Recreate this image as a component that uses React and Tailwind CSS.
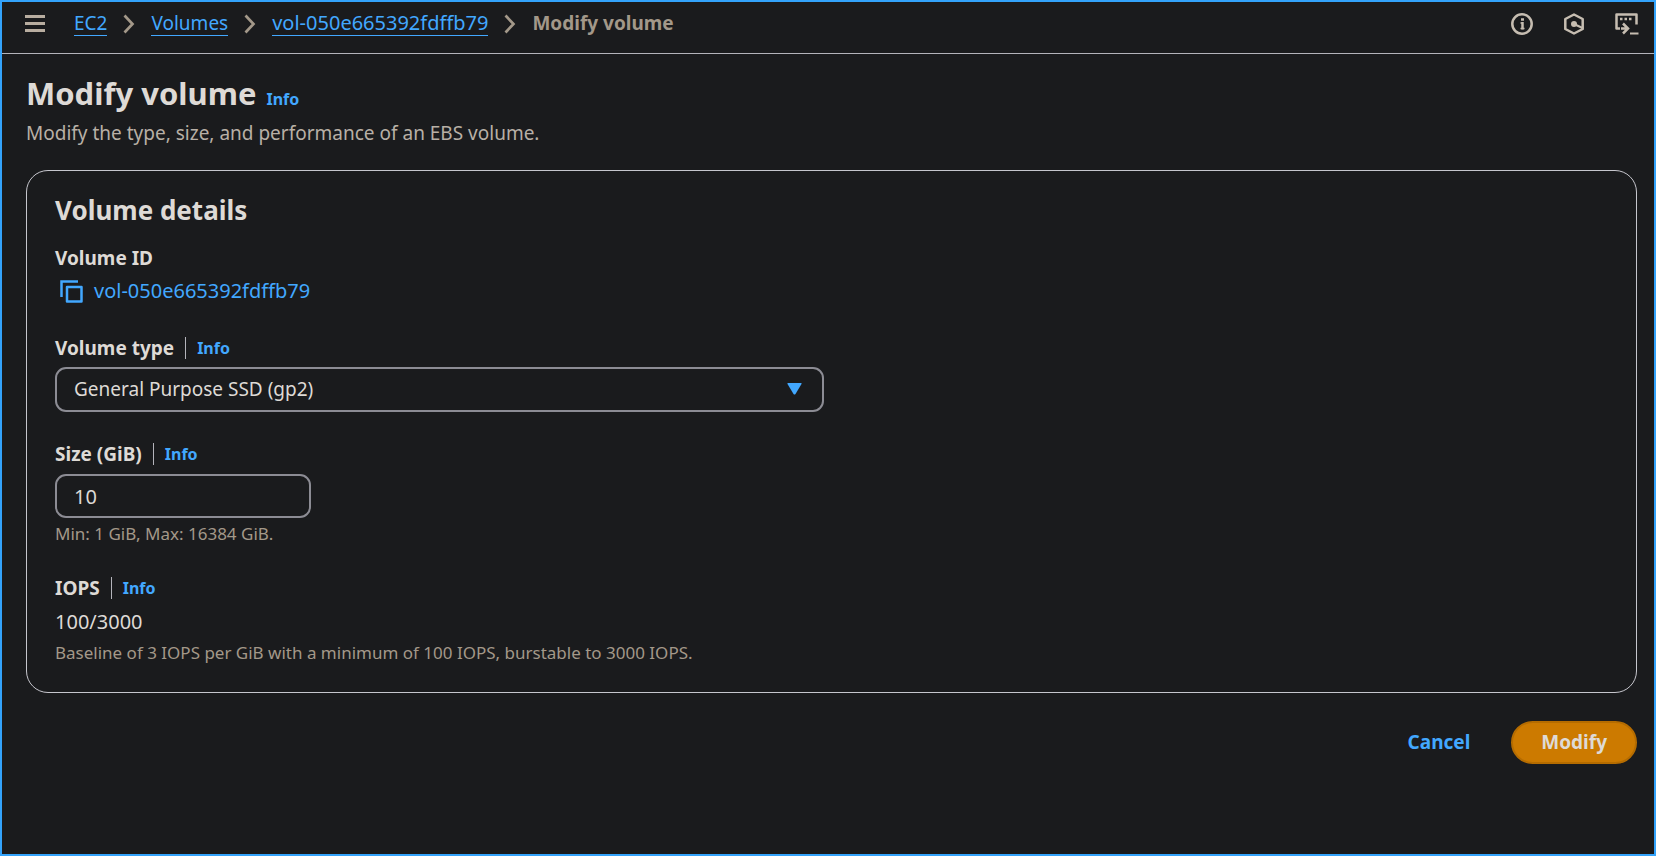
import React from "react";

const CRUMBS = [
  { label: "EC2", size: "text-[19px]" },
  { label: "Volumes", size: "text-[19px]" },
  { label: "vol-050e665392fdffb79", size: "text-[20px]" },
];

const ChevronIcon = () => (
  <svg width="12" height="20" viewBox="0 0 12 20" fill="none" stroke="#a39889" strokeWidth="2.700" aria-hidden="true">
    <path d="M1.500 1.500 9.500 10 1.500 18.500" />
  </svg>
);

const MenuIcon = () => (
  <svg width="20" height="18" viewBox="0 0 20 18" fill="#b8ada0" aria-hidden="true">
    <path d="M0 0h20v3H0zM0 7h20v3H0zM0 14h20v3H0z" />
  </svg>
);

const InfoIcon = () => (
  <svg width="22" height="22" viewBox="0 0 22 22" fill="none" stroke="#c6bdb1" aria-hidden="true">
    <circle cx="11" cy="11" r="9.700" strokeWidth="2.500" />
    <path d="M11.500 9v7.500" strokeWidth="2.500" />
    <path d="M9.500 10h2M9.500 15.500h4" strokeWidth="1.500" />
    <path d="M10 6.500h3" strokeWidth="2.500" />
  </svg>
);

const HexagonIcon = () => (
  <svg width="22" height="22" viewBox="0 0 22 22" fill="none" stroke="#c6bdb1" strokeWidth="2.500" aria-hidden="true">
    <path d="M11 1.500 19.700 6v10L11 20.500 2.300 16V6z" strokeLinejoin="round" />
    <circle cx="11" cy="11" r="3" fill="#c6bdb1" stroke="none" />
    <path d="m11 11 8.500 4" strokeWidth="2.200" />
  </svg>
);

const ShellIcon = () => (
  <svg width="24" height="22" viewBox="0 0 24 22" fill="none" stroke="#c6bdb1" strokeWidth="2.500" aria-hidden="true">
    <path d="M5 15.500H1.500V1.500h20v10" strokeLinejoin="round" />
    <path d="M5 6h2.500M9.500 6h2.500M14 6h2.500" />
    <path d="M6 15.500h6.500M8 10.500l5 5-5 5" />
    <path d="M15 20.500h8.500" strokeWidth="2" />
  </svg>
);

const CopyIcon = () => (
  <svg width="23" height="23" viewBox="0 0 23 23" fill="none" stroke="#42a8ff" strokeWidth="2.500" aria-hidden="true">
    <path d="M1.500 17V1.500H18" />
    <path d="M7 7h14.500v14.500H7z" strokeLinejoin="round" />
  </svg>
);

const InfoLink = ({ topic }) => (
  <a href="#info" aria-label={`Info: ${topic}`} className="text-[16px] font-bold text-[#42a8ff]">
    Info
  </a>
);

const FieldLabel = ({ htmlFor, children }) => (
  <div className="flex h-7 items-center">
    {htmlFor ? (
      <label htmlFor={htmlFor} className="font-bold">
        {children}
      </label>
    ) : (
      <span className="font-bold">{children}</span>
    )}
    <span className="mr-[11px] ml-[11px] h-[22px] w-px bg-[#b4b4bb]" />
    <InfoLink topic={children} />
  </div>
);

const Header = () => (
  <header className="flex h-[52px] items-center justify-between border-b border-[#b4b4bb] pr-[15px] pb-2 pl-[23px]">
    <div className="flex items-center">
      <button type="button" aria-label="Open navigation">
        <MenuIcon />
      </button>
      <nav aria-label="Breadcrumbs" className="ml-[29px]">
        <ol className="flex items-center gap-4">
          {CRUMBS.map((crumb) => (
            <li key={crumb.label} className="flex items-center gap-4">
              <a href="#crumb" className={`border-b border-[#42a8ff] leading-6 text-[#42a8ff] ${crumb.size}`}>
                {crumb.label}
              </a>
              <ChevronIcon />
            </li>
          ))}
          <li className="font-bold text-[#a39889]">Modify volume</li>
        </ol>
      </nav>
    </div>
    <div className="flex items-center gap-[30px]">
      <button type="button" aria-label="Information">
        <InfoIcon />
      </button>
      <button type="button" aria-label="Settings">
        <HexagonIcon />
      </button>
      <button type="button" aria-label="CloudShell">
        <ShellIcon />
      </button>
    </div>
  </header>
);

const VolumeDetails = () => (
  <section className="mt-[23px] rounded-[22px] border border-[#c6c6cd] px-7 pt-[21px] pb-[27px]">
    <h2 className="text-[26px] leading-9 font-bold">Volume details</h2>

    <div className="mt-4">
      <div className="leading-7 font-bold">Volume ID</div>
      <div className="mt-[3px] flex h-8 items-center gap-[11px] pl-[5px]">
        <button type="button" aria-label="Copy volume ID">
          <CopyIcon />
        </button>
        <a href="#volume" className="text-[20px] text-[#42a8ff]">
          vol-050e665392fdffb79
        </a>
      </div>
    </div>

    <div className="mt-[27px]">
      <FieldLabel htmlFor="volume-type">Volume type</FieldLabel>
      <div className="relative mt-[5px] max-w-[769px]">
        <select
          id="volume-type"
          className="h-[45px] w-full appearance-none rounded-[11px] border-2 border-[#8c8c94] bg-[#1a1b1d] px-[17px]"
        >
          <option>General Purpose SSD (gp2)</option>
        </select>
        <svg
          className="pointer-events-none absolute top-4 right-[22px]"
          width="15"
          height="12"
          viewBox="0 0 15 12"
          fill="#42a8ff"
          aria-hidden="true"
        >
          <path d="M1 0h13q1 0 .5 1L8.500 11q-1 1-2 0L.5 1Q0 0 1 0z" />
        </svg>
      </div>
    </div>

    <div className="mt-7">
      <FieldLabel htmlFor="size">Size (GiB)</FieldLabel>
      <input
        id="size"
        type="text"
        defaultValue="10"
        className="mt-1.5 block h-11 w-64 rounded-[11px] border-2 border-[#8c8c94] bg-[#1a1b1d] px-[17px] text-[20px]"
      />
      <p className="mt-1 text-[17px] leading-6 text-[#a39889]">Min: 1 GiB, Max: 16384 GiB.</p>
    </div>

    <div className="mt-7">
      <FieldLabel>IOPS</FieldLabel>
      <div className="mt-1 text-[20px] leading-8">100/3000</div>
      <p className="mt-[3px] text-[17px] leading-6 text-[#a39889]">
        Baseline of 3 IOPS per GiB with a minimum of 100 IOPS, burstable to 3000 IOPS.
      </p>
    </div>
  </section>
);

export default function App() {
  return (
    <div className="min-h-screen border-2 border-[#33a3fb] bg-[#1a1b1d] font-['Noto_Sans',sans-serif] text-[19px] text-[#dedad6]">
      <Header />
      <main className="pt-[19px] pr-[17px] pb-6 pl-6">
        <div className="flex items-baseline gap-2.5">
          <h1 className="text-[31px] leading-10 font-bold">Modify volume</h1>
          <InfoLink topic="Modify volume" />
        </div>
        <p className="mt-1.5 leading-7 text-[#b8b0a6]">Modify the type, size, and performance of an EBS volume.</p>
        <VolumeDetails />
        <div className="mt-7 flex items-center justify-end gap-3 font-bold">
          <button type="button" className="h-[43px] px-[29px] text-[#42a8ff]">
            Cancel
          </button>
          <button type="button" className="h-[43px] rounded-full border-2 border-[#b56c00] bg-[#cc7a00] px-7">
            Modify
          </button>
        </div>
      </main>
    </div>
  );
}
